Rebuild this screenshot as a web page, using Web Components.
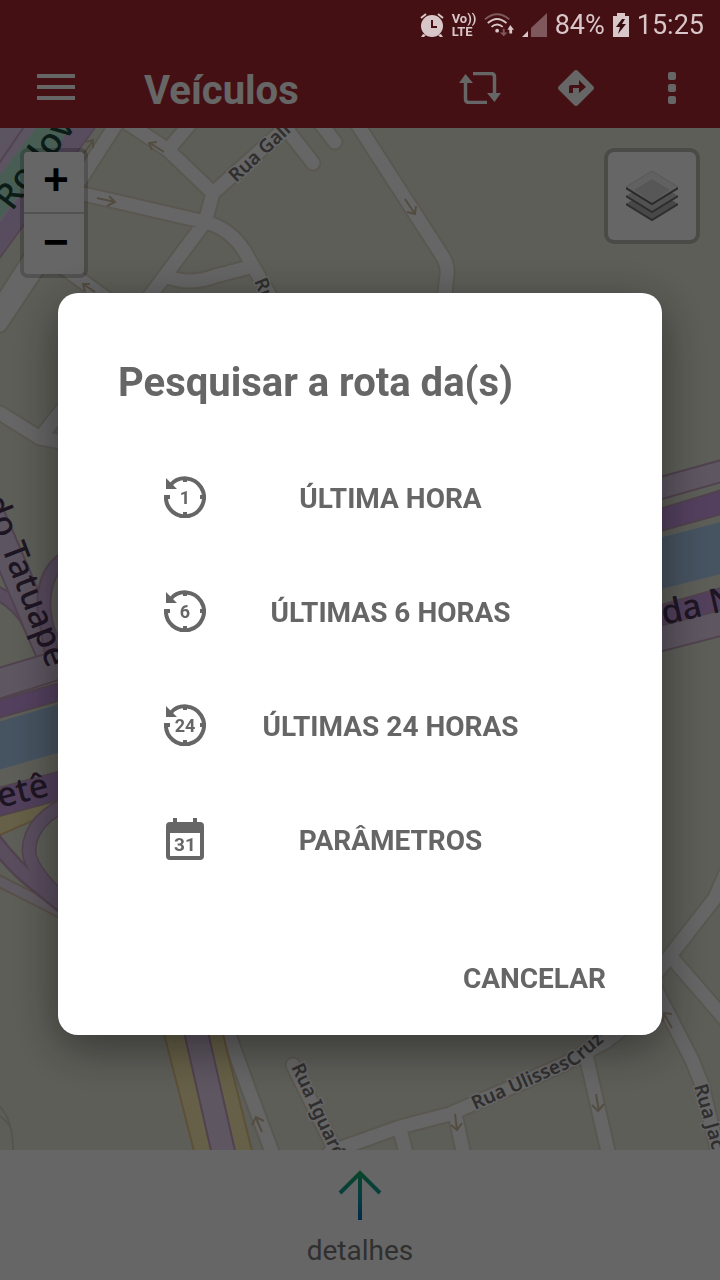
<!DOCTYPE html>
<html lang="pt-BR">
<head>
<meta charset="utf-8">
<meta name="viewport" content="width=device-width, initial-scale=1">
<title>Veículos</title>
<style>
  html, body { margin: 0; }
  body { font-family: Roboto, "Liberation Sans", sans-serif; background: #aa2832; }
</style>
</head>
<body>
<vehicle-app></vehicle-app>

<script>
const define = (name, html) => {
  const template = document.createElement('template');
  template.innerHTML = html;
  customElements.define(name, class extends HTMLElement {
    constructor() {
      super();
      this.attachShadow({ mode: 'open' }).append(template.content.cloneNode(true));
    }
  });
};

define('status-bar', `
  <style>
    :host { display: flex; align-items: center; justify-content: flex-end; gap: 8px; height: 48px; padding: 2px 16px 0;
            box-sizing: border-box; color: #d8c6c8; font-family: Roboto, sans-serif; font-size: 27px; line-height: 46px; }
    svg { display: block; fill: currentColor; flex: none; }
    .volte { font: bold 13px/13px Roboto, sans-serif; width: 24px; }
    .volte span { display: block; }
  </style>
  <svg width="24" height="24" viewBox="0 0 24 24" role="img" aria-label="Alarme">
    <circle cx="12" cy="13" r="11"/><path d="M3 21l-2 3h3l2-2zM21 21l2 3h-3l-2-2z"/>
    <path d="M1 5l5-4M23 5l-5-4" stroke="currentColor" stroke-width="2"/>
    <path d="M12 7v7h5" fill="none" stroke="#441014" stroke-width="2"/>
  </svg>
  <div class="volte"><span>Vo))</span><span>LTE</span></div>
  <svg width="30" height="26" viewBox="0 0 32 26" role="img" aria-label="Wi-Fi">
    <g fill="none" stroke="currentColor" stroke-width="2">
      <path d="M1 7Q14-4 27 7" opacity=".4"/><path d="M4 11Q14 2 24 11M8 15Q14 10 20 15"/>
    </g>
    <circle cx="14" cy="19" r="2"/>
    <path d="M20 17h2v4h3l-4 4-4-4h3z" opacity=".4"/><path d="M27 22v-4h-2l3-5 4 5h-2v4z"/>
  </svg>
  <svg width="25" height="24" viewBox="0 0 25 24" role="img" aria-label="Sinal">
    <path d="M0 24l6-6v6z"/><path d="M9 24V15L25 0v24z" opacity=".4"/>
  </svg>
  <span>84%</span>
  <svg width="16" height="24" viewBox="0 0 16 24" role="img" aria-label="Bateria">
    <path d="M4 0h8v3h4v21H0V3h4z"/><path d="M9 6L3 14h4l-2 7 8-10H9l3-5z" fill="#330c10"/>
  </svg>
  <span>15:25</span>
`);

define('icon-button', `
  <style>
    :host { display: block; }
    button { display: grid; place-items: center; width: 64px; height: 64px; margin: 0; padding: 0; border: 0; background: none; color: #fff; }
  </style>
  <button type="button" part="button"><slot></slot></button>
`);

define('app-header', `
  <style>
    :host { display: flex; align-items: center; height: 80px; padding: 0 16px 0 24px; box-sizing: border-box; color: #fff; background: #aa2832; }
    h1 { flex: 1; margin: 0; padding: 6px 0 0 56px; font-size: 40px; line-height: 48px; font-weight: 700; }
    nav { display: flex; gap: 32px; }
    svg { display: block; }
  </style>
  <icon-button><svg width="38" height="28" viewBox="0 0 38 28" fill="#fff" role="img" aria-label="Menu"><path d="M0 0h38v4H0zM0 11h38v4H0zM0 22h38v4H0z"/></svg></icon-button>
  <h1>Veículos</h1>
  <nav>
    <icon-button><svg width="42" height="32" viewBox="0 0 42 32" role="img" aria-label="Atualizar">
      <path d="M14 1.500H32Q35.500 1.500 35.500 5V23M28 30.500H10Q6.500 30.500 6.500 27V9" fill="none" stroke="#fff" stroke-width="3.500"/>
      <path d="M6.500 2L14 11H0zM35.500 30L28 21h14z" fill="#fff"/></svg></icon-button>
    <icon-button><svg width="36" height="36" viewBox="0 0 36 36" role="img" aria-label="Rotas">
      <path d="M16 1Q18-1 20 1L35 16Q37 18 35 20L20 35Q18 37 16 35L1 20Q-1 18 1 16Z" fill="#fff"/>
      <path d="M11 23v-6q0-2 2-2h8v-5l7 7-7 6v-5h-6v5z" fill="#aa2832"/></svg></icon-button>
    <icon-button><svg width="8" height="32" viewBox="0 0 8 32" fill="#fff" role="img" aria-label="Mais"><rect width="8" height="8" rx="2"/><rect y="12" width="8" height="8" rx="2"/><rect y="24" width="8" height="8" rx="2"/></svg></icon-button>
  </nav>
`);

const streets = `M108 110L168 150L213 193L205 222L147 300M168 150L195 118M213 193L300 115M60 189L110 200L205 222Q230 228 245 252L275 305M165 276Q190 286 215 276L250 267M270 108L313 163M310 110L335 142M345 105L443 257Q448 265 447 275L443 310M122 115L0 305M40 265L0 325M60 265L125 312M0 413L40 438L62 442M40 438L62 410M725 875L715 898L655 975M672 958L730 1025M655 988L692 1060L702 1085L720 1160M220 1010L250 1093L275 1160M293 1065L335 1150M330 1152L400 1127L450 1114L475 1103L560 1066L605 1042L640 1015M400 1130L408 1160M455 1114L465 1160M586 1055L610 1160`;
define('street-map', `
  <style>
    :host { display: block; }
    svg { display: block; width: 100%; height: 100%; }
    text { font-family: "Noto Sans", "Open Sans", sans-serif; }
    .street { font-size: 19px; font-weight: 600; fill: #787474; stroke: #fff; stroke-width: 3px; paint-order: stroke; }
    .major { font-size: 34px; font-weight: 500; fill: #4c3658; }
    .rodov { font-size: 36px; fill: #20463a; }
  </style>
  <svg viewBox="0 128 720 1022" preserveAspectRatio="xMidYMin slice" role="img" aria-label="Mapa">
    <path fill="#e9ebdc" d="M0 128h720v1022H0z"/>
    <g fill="none" stroke-linejoin="round" stroke-linecap="round">
      <path d="${streets}" stroke="#e0d8c8" stroke-width="17"/>
      <path d="${streets}" stroke="#fff" stroke-width="13"/>
    </g>
    <g stroke="#cfa8ca" stroke-width="2">
      <path d="M-2 100H115L-2 260z" fill="#e6d2f2"/><path d="M-2 225L70 128h24L-2 257z" fill="#dcc0ec" stroke="none"/>
      <path d="M57 100H93L-2 222V178z" fill="#b4ebd5" stroke="none"/>
      <path d="M30 118L-2 165" fill="none"/>
    </g>
    <g fill="none" stroke="#d0bea0" stroke-width="2">
      <path d="M83 154L93 141M86 142l7-2v8M97 198l18 4M109 196l6 6-8 4M164 152l-14-9M157 142l-8 1 3 7M405 199l10 15M416 206l-1 8-8-2M95 292l-12-8M90 284l-7 0 2 7M262 1132l-6-14M252 1125l4-8 8 4M455 1114l2 16M451 1125l6 5 5-7M596 1094l3 17M592 1105l6 6 6-7M672 1028l-8-14M663 1022l1-9 8 1"/>
    </g>
    <g stroke="#c9a5c2" stroke-width="2">
      <g fill="none" stroke-linejoin="round">
        <path d="M-10 590Q12 598 26 618L56 680" stroke-width="15"/><path d="M-10 590Q12 598 26 618L56 680" stroke="#dfbeec" stroke-width="11"/>
        <path d="M-20 490L58 672" stroke-width="30"/><path d="M-20 490L58 672" stroke="#e6d2f0" stroke-width="26"/>
        <path d="M72 555Q42 567 44 610L56 680" stroke-width="15"/><path d="M72 555Q42 567 44 610L56 680" stroke="#d9b8e8" stroke-width="11"/>
      </g>
      <path d="M-5 669L360 560L725 459V481L360 585L-5 700z" fill="#ead7f2"/>
      <path d="M-5 701L360 600L725 489V513L360 615L-5 719z" fill="#d0a0ee"/>
      <path d="M-5 723L360 615L725 521V573L360 665L-5 771z" fill="#afcff0" stroke="none"/>
      <path d="M-5 817L62 799V808L-5 837z" fill="#fff0b4" stroke="#e8c58c"/>
      <path d="M-5 789L360 690L725 587V611L360 720L-5 817z" fill="#cca0e8"/>
      <path d="M655 627L725 609V635L655 653z" fill="#ead7f2"/>
      <path d="M-5 879L70 917" fill="none" stroke="#dcc8b4" stroke-width="13"/><path d="M-5 879L70 917" fill="none" stroke="#eee2f2" stroke-width="9"/>
      <g fill="none">
        <path d="M-8 838Q15 868 35 883L75 915" stroke-width="17"/><path d="M75 800Q30 818 29 850Q28 870 75 912" stroke-width="15"/>
        <path d="M-8 838Q15 868 35 883L75 915M75 800Q30 818 29 850Q28 870 75 912" stroke="#dfc0ec" stroke-width="12"/>
      </g>
      <path d="M158 1010L195 1155H253L217 1010z" fill="#fff0b4" stroke="#e8c58c"/>
      <path d="M179 1010L212 1155H236L203 1010z" fill="#ead7f2"/>
      <path d="M-5 1103Q14 1115 13 1155M-5 1113Q5 1118 12 1130" fill="none" stroke="#d8d2c8"/>
    </g>
    <text class="street" transform="translate(236 183) rotate(-43)">Rua Gali</text>
    <text class="street" transform="translate(254 281) rotate(68)">Ru</text>
    <text class="street" transform="translate(291 1067) rotate(65)">Rua Iguaré</text>
    <text class="street" transform="translate(475 1110) rotate(-24)">Rua Ulisses</text>
    <text class="street" transform="translate(573 1068) rotate(-41)">Cruz</text>
    <text class="street" transform="translate(694 1086) rotate(74)">Rua Jac</text>
    <text class="major rodov" transform="translate(12 212) rotate(-53)">Rodov</text>
    <text class="major" transform="translate(-17 500) rotate(69)">do Tatuape</text>
    <text class="major" transform="translate(0 808) rotate(-14)">etê</text>
    <text class="major" transform="translate(664 625) rotate(-13)">da N</text>
  </svg>
`);

define('zoom-control', `
  <style>
    :host { display: flex; flex-direction: column; gap: 2px; width: 60px; border: 4px solid rgba(0,0,0,.2); border-radius: 8px; background: #ccc; background-clip: padding-box; overflow: hidden; }
    button { height: 60px; margin: 0; padding: 2px 0 0 4px; border: 0; background: #fff; color: #000; font: bold 44px/56px "Liberation Mono", monospace; }
  </style>
  <button type="button" aria-label="Aproximar">+</button>
  <button type="button" aria-label="Afastar">−</button>
`);

define('layers-control', `
  <style>
    :host { display: block; border: 4px solid rgba(0,0,0,.2); border-radius: 10px; background: #fff; background-clip: padding-box; }
    button { display: grid; place-items: center; width: 88px; height: 88px; margin: 0; padding: 0; border: 0; background: none; }
  </style>
  <button type="button" aria-label="Camadas">
    <svg width="52" height="52" viewBox="0 0 52 52">
      <path d="M0 34L26 18l26 16-26 16z" fill="#b4b4b4"/><path d="M0 34l26 16 26-16" fill="none" stroke="#737373" stroke-width="2"/>
      <path d="M0 26L26 10l26 16-26 16z" fill="#cacaca"/><path d="M0 26l26 16 26-16" fill="none" stroke="#737373" stroke-width="2"/>
      <path d="M0 17L26 1l26 16-26 17z" fill="#f2f2f2" stroke="#d8d8d8"/><path d="M8 20L26 9l18 11-18 13z" fill="#dadada"/><path d="M0 18l26 16 26-16" fill="none" stroke="#696969" stroke-width="2"/>
    </svg>
  </button>
`);

define('map-view', `
  <style>
    :host { display: block; position: relative; min-height: 400px; overflow: hidden; }
    street-map { position: absolute; inset: 0; }
    .controls { position: relative; display: flex; align-items: flex-start; justify-content: space-between; padding: 20px; }
  </style>
  <street-map></street-map>
  <div class="controls"><zoom-control></zoom-control><layers-control></layers-control></div>
`);

define('details-bar', `
  <style>
    :host { display: block; background: #fff; }
    button { display: flex; flex-direction: column; align-items: center; gap: 12px; width: 100%; margin: 0; padding: 20px 0 10px; border: 0; background: none; color: #787878; font: 28px/38px Roboto, sans-serif; }
  </style>
  <button type="button">
    <svg width="44" height="50" viewBox="0 0 44 50" aria-hidden="true">
      <defs><linearGradient id="g" gradientUnits="userSpaceOnUse" x1="0" y1="0" x2="0" y2="50"><stop stop-color="#18b064"/><stop offset=".5" stop-color="#129aa0"/><stop offset="1" stop-color="#0068b8"/></linearGradient></defs>
      <path d="M22 50V3M2 23L22 3l20 20" fill="none" stroke="url(#g)" stroke-width="4"/>
    </svg>
    <span>detalhes</span>
  </button>
`);

define('route-option', `
  <style>
    :host { display: block; }
    button { display: grid; grid-template-columns: 48px 1fr; align-items: center; width: 100%; height: 114px; margin: 0; padding: 0; border: 0; background: none;
             color: #666; font: bold 28px/36px Roboto, sans-serif; text-align: center; }
    span { padding-top: 4px; }
  </style>
  <button type="button"><slot name="icon"></slot><span><slot></slot></span></button>
`);

customElements.define('history-icon', class extends HTMLElement {
  connectedCallback() {
    if (this.shadowRoot) return;
    this.attachShadow({ mode: 'open' }).innerHTML = `
      <style>:host { display: grid; place-items: center; } svg { display: block; } text { font: bold 18px Roboto, sans-serif; }</style>
      <svg width="42" height="42" viewBox="0 0 42 42" fill="#666" aria-hidden="true">
        <path d="M6.500 9A19 19 0 1 1 2 20" fill="none" stroke="#666" stroke-width="4"/>
        <path d="M2 2L13 13H2zM0 19h6v4H0zM19 2h4v4h-4zM19 36h4v4h-4zM36 19h4v4h-4z"/>
        <text x="21" y="28" text-anchor="middle">${this.getAttribute('value')}</text>
      </svg>`;
  }
});

define('calendar-icon', `
  <style>:host { display: grid; place-items: center; } svg { display: block; } text { font: bold 19px Roboto, sans-serif; }</style>
  <svg width="38" height="42" viewBox="0 0 38 42" fill="#666" aria-hidden="true">
    <path fill-rule="evenodd" d="M7 0h4v4h16V0h4v4h3q4 0 4 4v30q0 4-4 4H4q-4 0-4-4V8q0-4 4-4h3zM4 15v23h30V15z"/>
    <text x="19" y="33" text-anchor="middle">31</text>
  </svg>
`);

define('route-dialog', `
  <style>
    :host { position: fixed; inset: 0; box-sizing: border-box; padding: 48px 58px 0; display: grid; align-items: center; justify-items: center; background: rgba(0,0,0,.6); }
    section { width: 100%; max-width: 604px; box-sizing: border-box; padding: 60px 0 26px; border-radius: 20px; background: #fff; color: #666; box-shadow: 0 12px 48px rgba(0,0,0,.45); }
    h2 { margin: 0 60px 27px; font-size: 40px; line-height: 60px; font-weight: 700; }
    .options { padding: 0 90px 0 103px; }
    footer { display: flex; justify-content: flex-end; padding: 53px 36px 0; }
    .cancel { height: 60px; margin: 0; padding: 0 20px; border: 0; background: none; color: #666; font: bold 28px/36px Roboto, sans-serif; }
  </style>
  <section role="dialog" aria-labelledby="title">
    <h2 id="title">Pesquisar a rota da(s)</h2>
    <div class="options">
      <route-option><history-icon slot="icon" value="1"></history-icon>ÚLTIMA HORA</route-option>
      <route-option><history-icon slot="icon" value="6"></history-icon>ÚLTIMAS 6 HORAS</route-option>
      <route-option><history-icon slot="icon" value="24"></history-icon>ÚLTIMAS 24 HORAS</route-option>
      <route-option><calendar-icon slot="icon"></calendar-icon>PARÂMETROS</route-option>
    </div>
    <footer><button class="cancel" type="button">CANCELAR</button></footer>
  </section>
`);

define('vehicle-app', `
  <style>
    :host { display: flex; flex-direction: column; min-height: 100vh; }
    map-view { flex: 1; }
    status-bar { position: relative; z-index: 2; }
    route-dialog { z-index: 1; }
  </style>
  <status-bar></status-bar>
  <app-header></app-header>
  <map-view></map-view>
  <details-bar></details-bar>
  <route-dialog></route-dialog>
`);
</script>
</body>
</html>
